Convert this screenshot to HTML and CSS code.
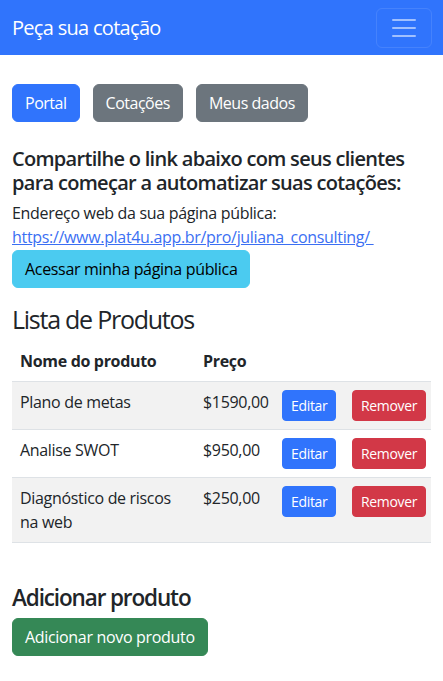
FILE: index.html
```html
<!DOCTYPE html>
<html lang="pt-BR">
<head>
<meta charset="utf-8">
<title>Peça sua cotação</title>
<link rel="stylesheet" href="styles.css">
</head>
<body>
<nav class="navbar">
  <a class="brand" href="#">Peça sua cotação</a>
  <button class="toggler" type="button" aria-label="Menu">
    <svg class="toggler-icon" viewBox="0 0 30 30" width="30" height="30"><path d="M4 7h22M4 15h22M4 23h22" stroke="rgba(255,255,255,0.55)" stroke-width="2" stroke-linecap="round" fill="none"/></svg>
  </button>
</nav>
<main class="container">
  <div class="tabs">
    <a class="btn btn-primary" href="#">Portal</a>
    <a class="btn btn-secondary" href="#">Cotações</a>
    <a class="btn btn-secondary" href="#">Meus dados</a>
  </div>
  <h5 class="share-title">Compartilhe o link abaixo com seus clientes para começar a automatizar suas cotações:</h5>
  <div class="line">Endereço web da sua página pública:</div>
  <div class="line"><a class="link" href="#">https://www.plat4u.app.br/pro/juliana_consulting/&nbsp;</a></div>
  <div class="public-btn"><a class="btn btn-info" href="#">Acessar minha página pública</a></div>
  <h2 class="list-title">Lista de Produtos</h2>
  <table class="table">
    <colgroup>
      <col class="c-name"><col class="c-price"><col class="c-edit"><col class="c-del">
    </colgroup>
    <thead>
      <tr><th>Nome do produto</th><th>Preço</th><th></th><th></th></tr>
    </thead>
    <tbody>
      <tr class="striped"><td>Plano de metas</td><td>$1590,00</td><td><a class="btn btn-sm btn-primary" href="#">Editar</a></td><td><a class="btn btn-sm btn-danger" href="#">Remover</a></td></tr>
      <tr><td>Analise SWOT</td><td>$950,00</td><td><a class="btn btn-sm btn-primary" href="#">Editar</a></td><td><a class="btn btn-sm btn-danger" href="#">Remover</a></td></tr>
      <tr class="striped"><td>Diagnóstico de riscos na web</td><td>$250,00</td><td><a class="btn btn-sm btn-primary" href="#">Editar</a></td><td><a class="btn btn-sm btn-danger" href="#">Remover</a></td></tr>
    </tbody>
  </table>
  <h3 class="add-title">Adicionar produto</h3>
  <a class="btn btn-success" href="#">Adicionar novo produto</a>
</main>
</body>
</html>
```

FILE: styles.css
```css
* { box-sizing: border-box; }
html, body { margin: 0; padding: 0; }
body {
  font-family: "Open Sans", "Noto Sans", sans-serif;
  font-size: 16px;
  line-height: 1.5;
  color: #212529;
  background: #fff;
  letter-spacing: -0.02em;
}
.navbar {
  height: 55px;
  background: #3074fc;
  display: flex;
  align-items: center;
  justify-content: space-between;
  padding: 0 11px 0 12px;
}
.brand {
  color: #fff;
  font-size: 20px;
  text-decoration: none;
  line-height: 30px;
  letter-spacing: -0.035em;
}
.toggler {
  width: 56px;
  height: 40px;
  padding: 0;
  background: transparent;
  border: 1px solid rgba(255,255,255,0.1);
  border-radius: 6px;
  display: flex;
  align-items: center;
  justify-content: center;
}
.toggler-icon { display: block; }
.container { padding: 29px 12px 24px; }
.tabs { display: flex; gap: 13px; }
.tabs .btn { letter-spacing: -0.03em; }
.btn {
  display: inline-block;
  font-size: 16px;
  line-height: 24px;
  padding: 6px 12px;
  border: 1px solid transparent;
  border-radius: 6px;
  text-decoration: none;
  color: #fff;
  white-space: nowrap;
}
.btn-primary { background: #3074fc; border-color: #3074fc; }
.btn-secondary { background: #6c757d; border-color: #6c757d; }
.btn-info { background: #4bcbf0; border-color: #4bcbf0; color: #000; }
.btn-success { background: #358856; border-color: #358856; }
.btn-danger { background: #d23847; border-color: #d23847; }
.btn-sm {
  font-size: 14px;
  line-height: 21px;
  padding: 4px 8px;
  border-radius: 4px;
}
.share-title {
  font-size: 20px;
  font-weight: 600;
  line-height: 24px;
  letter-spacing: -0.035em;
  margin: 25px 0 6px;
}
.line { line-height: 24px; }
.link { color: #3b6ff3; text-decoration: underline; }
.public-btn { margin-top: 1px; }
.list-title {
  font-size: 25px;
  font-weight: 400;
  line-height: 34px;
  letter-spacing: -0.05em;
  margin: 14px 0 5px;
}
.table {
  width: 100%;
  border-collapse: collapse;
  table-layout: fixed;
  margin: 0;
}
.c-name { width: 183px; }
.c-price { width: 79px; }
.c-edit { width: 70px; }
.c-del { width: 87px; }
.table th, .table td {
  padding: 8px;
  text-align: left;
  vertical-align: top;
  border-bottom: 1px solid #dee2e6;
}
.table th { font-weight: 700; }
.table tr.striped td { background: #f2f2f2; }
.add-title {
  font-size: 22.5px;
  font-weight: 600;
  line-height: 28px;
  letter-spacing: -0.05em;
  margin: 41px 0 6px;
}
```
